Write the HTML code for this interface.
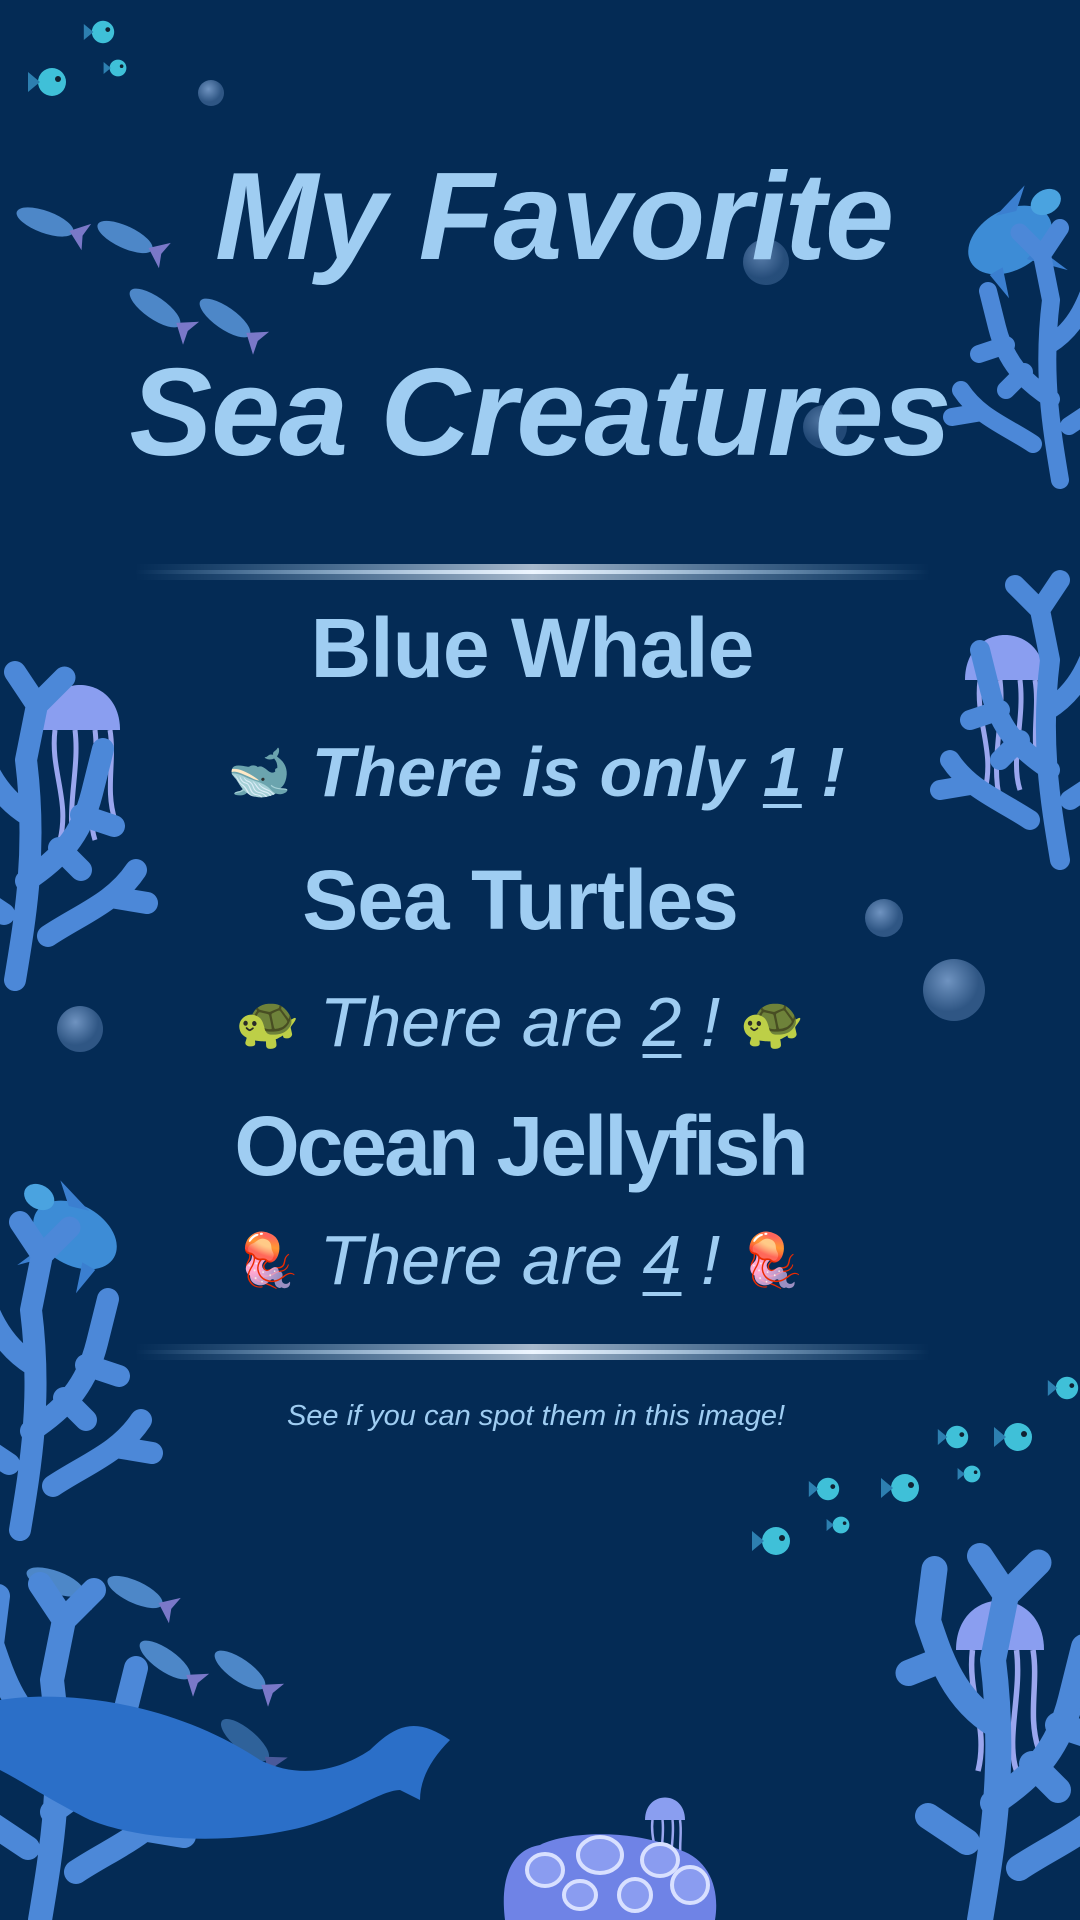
<!DOCTYPE html>
<html><head><meta charset="utf-8">
<style>
html,body{margin:0;padding:0;}
body{width:1080px;height:1920px;background:#042b55;position:relative;overflow:hidden;font-family:"Liberation Sans",sans-serif;color:#9fcdf2;}
svg.bg{position:absolute;left:0;top:0;}
.t{position:absolute;left:0;width:1080px;text-align:center;white-space:nowrap;}
.title{font-weight:bold;font-style:italic;font-size:124px;letter-spacing:-1px;}
.h{font-size:84px;font-weight:bold;letter-spacing:-1px;}
.s{font-size:70px;font-style:italic;}
.e{font-size:52px;font-style:normal;vertical-align:6px;}
.cap{font-size:29px;font-style:italic;}
u{text-decoration-thickness:4px;text-underline-offset:8px;}
</style></head><body>
<svg class="bg" width="1080" height="1920" viewBox="0 0 1080 1920">
<defs>
<linearGradient id="dv" x1="0" x2="1"><stop offset="0" stop-color="#9fcdf2" stop-opacity="0"/><stop offset=".5" stop-color="#eef6ff"/><stop offset="1" stop-color="#9fcdf2" stop-opacity="0"/></linearGradient>
<radialGradient id="bb" cx=".4" cy=".35"><stop offset="0" stop-color="#6f93c0"/><stop offset="1" stop-color="#2f5684"/></radialGradient>
<g id="coral" fill="none" stroke="#4c88d8" stroke-width="20" stroke-linecap="round">
<path d="M0 0 C10 -60 20 -120 10 -200 M10 -90 C40 -110 60 -130 70 -170 M40 -120 L60 -100 M12 -150 C-20 -170 -30 -200 -40 -230 M-30 -200 L-55 -190 M10 -200 L20 -250 M60 -150 L90 -140 M70 -170 L80 -210 M-40 -230 L-35 -270 M20 -250 L0 -280 M20 -250 L45 -275 M-10 -60 L-40 -80 M30 -40 C60 -60 90 -70 110 -100 M90 -75 L120 -70"/>
</g>
<g id="fish"><ellipse cx="0" cy="0" rx="30" ry="11" fill="#4d87c8"/><path d="M26 0 L44 -14 L40 0 L44 14Z" fill="#7a78c8"/></g>
<g id="tfish"><circle cx="0" cy="0" r="14" fill="#3fc0d8"/><path d="M-12 0 L-24 -10 L-24 10Z" fill="#2d7fb0"/><circle cx="6" cy="-3" r="3" fill="#123"/></g>
<g id="jelly"><path d="M-40 0 C-40 -60 40 -60 40 0 Z" fill="#8a9ef0"/><path d="M-25 0 C-30 40 -10 70 -20 110 M-5 0 C0 40 -15 80 -5 120 M15 0 C20 40 5 80 15 110 M30 0 C35 30 25 60 35 90" stroke="#9aa6ee" stroke-width="5" fill="none"/></g>
<g id="turtle"><ellipse cx="0" cy="0" rx="45" ry="30" fill="#3d8cd6"/><ellipse cx="-50" cy="-15" rx="16" ry="12" fill="#4aa3e0"/><path d="M-20 20 L-35 55 L-5 25Z M20 20 L30 50 L35 20Z M-20 -22 L-40 -40 L0 -28Z" fill="#3b7fd0"/></g>
</defs>
<rect x="135" y="564" width="795" height="16" fill="url(#dv)" opacity=".7"/>
<rect x="135" y="570" width="795" height="4" fill="url(#dv)"/>
<rect x="135" y="1344" width="795" height="16" fill="url(#dv)" opacity=".7"/>
<rect x="135" y="1350" width="795" height="4" fill="url(#dv)"/>
<circle cx="211" cy="93" r="13" fill="url(#bb)"/>
<circle cx="766" cy="262" r="23" fill="url(#bb)" opacity=".8"/>
<circle cx="825" cy="427" r="22" fill="url(#bb)" opacity=".7"/>
<circle cx="884" cy="918" r="19" fill="url(#bb)"/>
<circle cx="954" cy="990" r="31" fill="url(#bb)"/>
<circle cx="80" cy="1029" r="23" fill="url(#bb)"/>
<use href="#fish" transform="translate(45,222) rotate(20)"/>
<use href="#fish" transform="translate(125,237) rotate(25)"/>
<use href="#fish" transform="translate(155,308) rotate(35)"/>
<use href="#fish" transform="translate(225,318) rotate(35)"/>
<use href="#fish" transform="translate(55,1582) rotate(20)"/>
<use href="#fish" transform="translate(135,1592) rotate(25)"/>
<use href="#fish" transform="translate(165,1660) rotate(35)"/>
<use href="#fish" transform="translate(240,1670) rotate(35)"/>
<use href="#fish" transform="translate(245,1740) rotate(40)" opacity=".6"/>
<use href="#tfish" transform="translate(52,82)"/>
<use href="#tfish" transform="translate(103,32) scale(.8)"/>
<use href="#tfish" transform="translate(118,68) scale(.6)"/>
<use href="#tfish" transform="translate(1067,1388) scale(.8)"/>
<use href="#tfish" transform="translate(1018,1437)"/>
<use href="#tfish" transform="translate(957,1437) scale(.8)"/>
<use href="#tfish" transform="translate(972,1474) scale(.6)"/>
<use href="#tfish" transform="translate(905,1488)"/>
<use href="#tfish" transform="translate(828,1489) scale(.8)"/>
<use href="#tfish" transform="translate(841,1525) scale(.6)"/>
<use href="#tfish" transform="translate(776,1541)"/>
<use href="#turtle" transform="translate(1010,240) rotate(-30) scale(-1,1)"/>
<use href="#turtle" transform="translate(75,1235) rotate(30)"/>
<use href="#jelly" transform="translate(80,730)"/>
<use href="#jelly" transform="translate(1005,680)"/>
<use href="#jelly" transform="translate(1000,1650) scale(1.1)"/>
<use href="#jelly" transform="translate(665,1820) scale(.5)"/>
<use href="#coral" transform="translate(15,980) scale(1.1)"/>
<use href="#coral" transform="translate(20,1530) scale(1.1)"/>
<use href="#coral" transform="translate(40,1920) scale(1.2)"/>
<use href="#coral" transform="translate(1060,480) scale(-.9,.9)"/>
<use href="#coral" transform="translate(1060,860) scale(-1,1)"/>
<use href="#coral" transform="translate(980,1920) scale(1.3)"/>
<path d="M0 1700 C60 1690 170 1700 260 1760 C300 1780 340 1770 370 1750 C400 1720 420 1720 450 1740 C430 1760 420 1780 420 1800 L400 1790 C380 1790 340 1820 290 1830 C220 1845 140 1840 90 1820 C50 1800 20 1780 0 1770Z" fill="#2b6fc8"/>
<path d="M505 1920 C500 1880 510 1850 540 1845 C570 1830 640 1830 680 1850 C710 1860 720 1890 715 1920Z" fill="#6f83e6"/>
<g fill="#8a9cf0" stroke="#d8e0ff" stroke-width="4">
<ellipse cx="545" cy="1870" rx="18" ry="16"/><ellipse cx="600" cy="1855" rx="22" ry="18"/><ellipse cx="660" cy="1860" rx="18" ry="16"/><ellipse cx="690" cy="1885" rx="18" ry="18"/><ellipse cx="580" cy="1895" rx="16" ry="14"/><ellipse cx="635" cy="1895" rx="16" ry="16"/></g>
</svg>

<div class="t title" style="top:146px;left:14px;">My Favorite</div>
<div class="t title" style="top:342px;">Sea Creatures</div>
<div class="t h" style="top:600px;left:-8px;">Blue Whale</div>
<div class="t s" style="top:732px;left:-4px;"><span class="e">🐋</span> <b>There is only <u>1</u> !</b></div>
<div class="t h" style="top:852px;left:-20px;">Sea Turtles</div>
<div class="t s" style="top:982px;left:-20px;"><span class="e">🐢</span> There are <u>2</u> ! <span class="e">🐢</span></div>
<div class="t h" style="top:1098px;left:-20px;letter-spacing:-3px;">Ocean Jellyfish</div>
<div class="t s" style="top:1220px;left:-20px;"><span class="e">🪼</span> There are <u>4</u> ! <span class="e">🪼</span></div>
<div class="t cap" style="top:1400px;left:-4px;">See if you can spot them in this image!</div>
</body></html>
